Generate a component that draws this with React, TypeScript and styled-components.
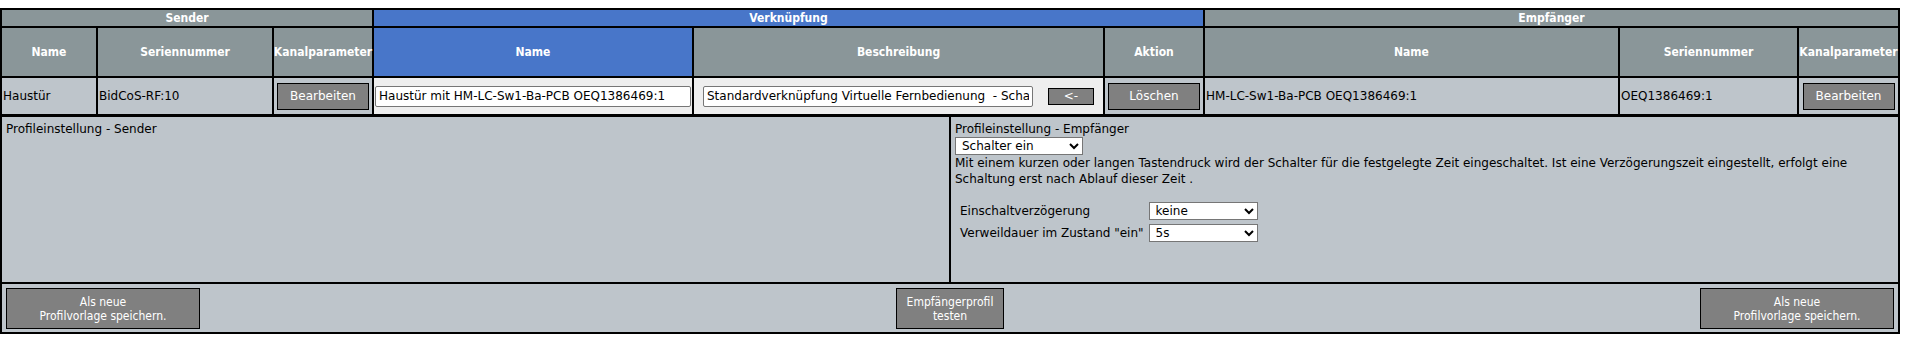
import React from 'react'
import styled, { createGlobalStyle } from 'styled-components'

const GlobalStyle = createGlobalStyle`
  body {
    margin: 8px 8px 0 0;
    background: #ffffff;
    font-family: "DejaVu Sans", Verdana, sans-serif;
    font-size: 12px;
    color: #000000;
  }
`

const HEAD = '#8a9699'
const CELL = '#bec5cb'
const BLUE = '#4876c9'
const LIGHT = '#eeeeee'

const LinkGrid = styled.div`
  display: grid;
  width: 1900px;
  box-sizing: border-box;
  background: #000;
  padding: 2px;
  gap: 2px;
  grid-template-columns: 94px 174px 98px 318px 409px 98px 413px 177px 99px;
  grid-template-rows: 16px 48px 36px;
`

const GroupHead = styled.div<{ $span: number; $blue?: boolean }>`
  grid-column: span ${p => p.$span};
  background: ${p => (p.$blue ? BLUE : HEAD)};
  color: #fff;
  font-family: "DejaVu Sans Condensed", "DejaVu Sans", sans-serif;
  font-stretch: condensed;
  font-weight: bold;
  font-size: 12px;
  line-height: 16px;
  text-align: center;
`

const ColHead = styled.div<{ $blue?: boolean }>`
  background: ${p => (p.$blue ? BLUE : HEAD)};
  color: #fff;
  font-family: "DejaVu Sans Condensed", "DejaVu Sans", sans-serif;
  font-stretch: condensed;
  font-weight: bold;
  font-size: 12px;
  display: flex;
  align-items: center;
  justify-content: center;
  white-space: nowrap;
`

const Cell = styled.div<{ $light?: boolean; $center?: boolean }>`
  background: ${p => (p.$light ? LIGHT : CELL)};
  display: flex;
  align-items: center;
  justify-content: ${p => (p.$center ? 'center' : 'flex-start')};
  gap: 15px;
  padding: 0 1px;
  white-space: nowrap;
  overflow: hidden;
`

const GrayButton = styled.button<{ $w: number; $h: number }>`
  width: ${p => p.$w}px;
  height: ${p => p.$h}px;
  background: #808080;
  border: 1px solid #000;
  border-radius: 0;
  color: #fff;
  font-family: "DejaVu Sans", sans-serif;
  font-size: 12px;
  padding: 0;
  line-height: 14px;
  cursor: pointer;
`

const TextField = styled.input<{ $w: number }>`
  width: ${p => p.$w}px;
  height: 21px;
  box-sizing: border-box;
  border: 1px solid #767676;
  border-radius: 2px;
  background: #fff;
  padding: 0 3px;
  font-family: "DejaVu Sans", sans-serif;
  font-size: 12px;
  color: #000;
`

const ProfileGrid = styled.div`
  display: grid;
  width: 1900px;
  box-sizing: border-box;
  background: #000;
  padding: 1px 2px 2px 2px;
  gap: 2px;
  grid-template-columns: 1fr 1fr;
  grid-template-rows: 165px 48px;
`

const ProfileCell = styled.div`
  background: ${CELL};
  padding: 5px 4px 0 4px;
  line-height: 15px;
`

const Description = styled.div`
  font-size: 12px;
  line-height: 16px;
  margin-bottom: 15px;
`

const Picker = styled.select<{ $w: number }>`
  width: ${p => p.$w}px;
  height: 18px;
  box-sizing: border-box;
  border: 1px solid #767676;
  border-radius: 0;
  background: #fff;
  font-family: "DejaVu Sans", sans-serif;
  font-size: 12px;
  padding: 0 2px;
  color: #000;
`

const ParamTable = styled.div`
  display: grid;
  grid-template-columns: auto auto;
  justify-content: start;
  column-gap: 5px;
  row-gap: 4px;
  padding-left: 5px;
  align-items: center;
`

const ParamLabel = styled.span`
  font-size: 12px;
`

const ActionRow = styled.div`
  grid-column: 1 / -1;
  background: ${CELL};
  display: grid;
  grid-template-columns: 1fr auto 1fr;
  align-items: start;
  padding: 4px 4px 0 4px;
`

const ActionButton = styled(GrayButton)<{ $side: 'start' | 'center' | 'end' }>`
  justify-self: ${p => p.$side};
  font-family: "DejaVu Sans Condensed", "DejaVu Sans", sans-serif;
  font-stretch: condensed;
`

export default function App() {
  return (
    <>
      <GlobalStyle />
      <LinkGrid>
        <GroupHead $span={3}>Sender</GroupHead>
        <GroupHead $span={3} $blue>Verknüpfung</GroupHead>
        <GroupHead $span={3}>Empfänger</GroupHead>

        <ColHead>Name</ColHead>
        <ColHead>Seriennummer</ColHead>
        <ColHead>Kanalparameter</ColHead>
        <ColHead $blue>Name</ColHead>
        <ColHead>Beschreibung</ColHead>
        <ColHead>Aktion</ColHead>
        <ColHead>Name</ColHead>
        <ColHead>Seriennummer</ColHead>
        <ColHead>Kanalparameter</ColHead>

        <Cell>Haustür</Cell>
        <Cell>BidCoS-RF:10</Cell>
        <Cell $center><GrayButton $w={92} $h={27}>Bearbeiten</GrayButton></Cell>
        <Cell $light $center>
          <TextField $w={316} defaultValue="Haustür mit HM-LC-Sw1-Ba-PCB OEQ1386469:1" />
        </Cell>
        <Cell $light $center>
          <TextField $w={330} defaultValue="Standardverknüpfung Virtuelle Fernbedienung  - Schalter ein" />
          <GrayButton $w={46} $h={17}>&lt;-</GrayButton>
        </Cell>
        <Cell $center><GrayButton $w={92} $h={27}>Löschen</GrayButton></Cell>
        <Cell>HM-LC-Sw1-Ba-PCB OEQ1386469:1</Cell>
        <Cell>OEQ1386469:1</Cell>
        <Cell $center><GrayButton $w={92} $h={27}>Bearbeiten</GrayButton></Cell>
      </LinkGrid>

      <ProfileGrid>
        <ProfileCell>Profileinstellung - Sender</ProfileCell>
        <ProfileCell>
          <div>Profileinstellung - Empfänger</div>
          <Picker $w={128} defaultValue="on">
            <option value="on">Schalter ein</option>
            <option value="off">Schalter aus</option>
          </Picker>
          <Description>
            Mit einem kurzen oder langen Tastendruck wird der Schalter für die festgelegte Zeit eingeschaltet. Ist eine Verzögerungszeit eingestellt, erfolgt eine Schaltung erst nach Ablauf dieser Zeit .
          </Description>
          <ParamTable>
            <ParamLabel>Einschaltverzögerung</ParamLabel>
            <Picker $w={109} defaultValue="keine">
              <option value="keine">keine</option>
            </Picker>
            <ParamLabel>Verweildauer im Zustand "ein"</ParamLabel>
            <Picker $w={109} defaultValue="5s">
              <option value="5s">5s</option>
            </Picker>
          </ParamTable>
        </ProfileCell>
        <ActionRow>
          <ActionButton $side="start" $w={194} $h={41}>Als neue<br />Profilvorlage speichern.</ActionButton>
          <ActionButton $side="center" $w={108} $h={41}>Empfängerprofil<br />testen</ActionButton>
          <ActionButton $side="end" $w={194} $h={41}>Als neue<br />Profilvorlage speichern.</ActionButton>
        </ActionRow>
      </ProfileGrid>
    </>
  )
}
